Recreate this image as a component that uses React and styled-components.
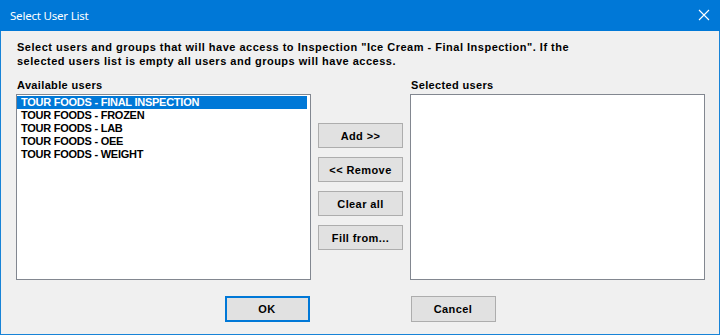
import React from "react";
import styled, { createGlobalStyle } from "styled-components";

const Global = createGlobalStyle`
  html, body { margin: 0; padding: 0; background: #f0f0f0; }
  #root { width: 720px; height: 335px; }
`;

const Window = styled.div`
  box-sizing: border-box;
  width: 720px;
  height: 335px;
  border: 1px solid #1883d7;
  border-top: none;
  background: #f0f0f0;
  display: flex;
  flex-direction: column;
  font-family: "Liberation Sans", Arial, sans-serif;
  color: #000;
`;

const TitleBar = styled.div`
  height: 31px;
  margin: 0 -1px;
  background: #0078d7;
  display: flex;
  align-items: center;
  justify-content: space-between;
  padding: 0 10px 0 10px;
  box-sizing: border-box;
`;

const Title = styled.span`
  color: #fff;
  font-family: "Noto Sans", "Liberation Sans", sans-serif;
  font-size: 11.5px;
  letter-spacing: -0.2px;
  line-height: 16px;
`;

const CloseIcon = styled.svg`
  width: 12px;
  height: 12px;
  margin-top: -1px;
`;

const Body = styled.div`
  flex: 1;
  display: flex;
  flex-direction: column;
  padding: 9px 14px 0 15px;
  font-weight: bold;
  font-size: 11px;
  letter-spacing: 0.5px;
`;

const Description = styled.p`
  margin: 0 0 0 1px;
  line-height: 14px;
  white-space: pre-line;
`;

const Columns = styled.div`
  display: flex;
  gap: 7px;
  margin-top: 11px;
`;

const Column = styled.div`
  display: flex;
  flex-direction: column;
  width: 295px;
`;

const Label = styled.div`
  line-height: 13px;
  height: 15px;
  padding-left: 1px;
  letter-spacing: 0.35px;
`;

const ListBox = styled.div`
  box-sizing: border-box;
  height: 186px;
  background: #fff;
  border: 1px solid #828790;
  padding: 1px 3px 0 0;
`;

const Item = styled.div`
  height: 13px;
  line-height: 13px;
  padding-left: 4px;
  letter-spacing: -0.25px;
  white-space: nowrap;
  background: ${(p) => (p.$selected ? "#0078d7" : "transparent")};
  color: ${(p) => (p.$selected ? "#fff" : "#000")};
`;

const ButtonColumn = styled.div`
  width: 85px;
  display: flex;
  flex-direction: column;
  gap: 9px;
  padding-top: 44px;
`;

const Button = styled.button`
  box-sizing: border-box;
  width: ${(p) => p.$w || 85}px;
  height: ${(p) => p.$h || 25}px;
  background: #e1e1e1;
  border: ${(p) => (p.$default ? "2px solid #0078d7" : "1px solid #adadad")};
  font-family: "Liberation Sans", Arial, sans-serif;
  font-weight: bold;
  font-size: 11px;
  letter-spacing: 0.4px;
  color: #000;
  padding: 0;
  margin: 0;
`;

const Footer = styled.div`
  display: flex;
  justify-content: center;
  gap: 101px;
  margin-top: 16px;
  padding-right: 1px;
`;

const users = [
  "TOUR FOODS - FINAL INSPECTION",
  "TOUR FOODS - FROZEN",
  "TOUR FOODS - LAB",
  "TOUR FOODS - OEE",
  "TOUR FOODS - WEIGHT",
];

export default function App() {
  return (
    <>
      <Global />
      <Window>
        <TitleBar>
          <Title>Select User List</Title>
          <CloseIcon viewBox="0 0 12 12">
            <path d="M1 1 L11 11 M11 1 L1 11" stroke="#fff" strokeWidth="1.1" fill="none" />
          </CloseIcon>
        </TitleBar>
        <Body>
          <Description>
            {'Select users and groups that will have access to Inspection "Ice Cream - Final Inspection". If the\nselected users list is empty all users and groups will have access.'}
          </Description>
          <Columns>
            <Column>
              <Label>Available users</Label>
              <ListBox>
                {users.map((u, i) => (
                  <Item key={u} $selected={i === 0}>
                    {u}
                  </Item>
                ))}
              </ListBox>
            </Column>
            <ButtonColumn>
              <Button>Add &gt;&gt;</Button>
              <Button>&lt;&lt; Remove</Button>
              <Button>Clear all</Button>
              <Button>Fill from...</Button>
            </ButtonColumn>
            <Column>
              <Label>Selected users</Label>
              <ListBox />
            </Column>
          </Columns>
          <Footer>
            <Button $default $w={85} $h={26}>OK</Button>
            <Button $w={85} $h={26}>Cancel</Button>
          </Footer>
        </Body>
      </Window>
    </>
  );
}
